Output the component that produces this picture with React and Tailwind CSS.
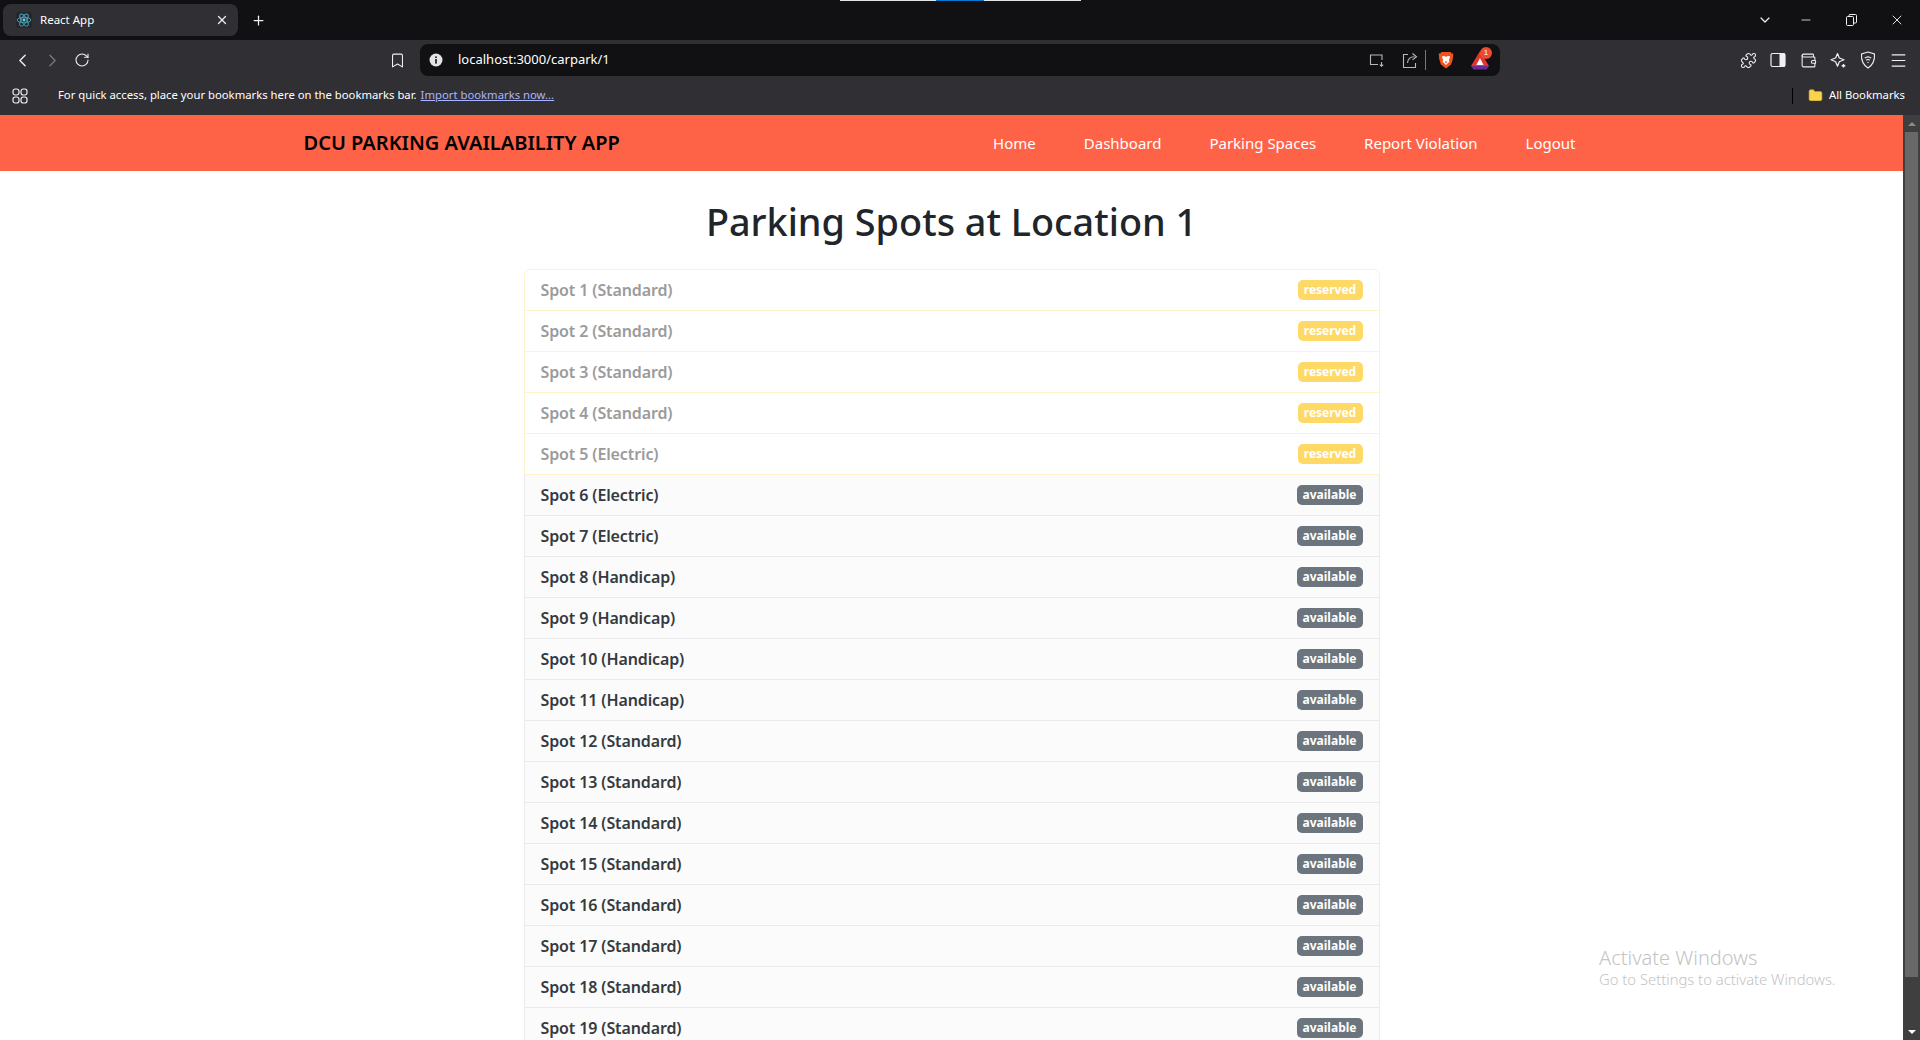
import React from "react";
import { ChevronLeft, ChevronRight, ChevronDown, RotateCw, Bookmark, Plus, X, Minus, Puzzle, Wallet, Menu, Folder } from "lucide-react";

const spots = [
  ["Standard", "reserved"], ["Standard", "reserved"], ["Standard", "reserved"], ["Standard", "reserved"],
  ["Electric", "reserved"], ["Electric", "available"], ["Electric", "available"], ["Handicap", "available"],
  ["Handicap", "available"], ["Handicap", "available"], ["Handicap", "available"], ["Standard", "available"],
  ["Standard", "available"], ["Standard", "available"], ["Standard", "available"], ["Standard", "available"],
  ["Standard", "available"], ["Standard", "available"], ["Standard", "available"],
];

const navLinks = ["Home", "Dashboard", "Parking Spaces", "Report Violation", "Logout"];

const Slot = ({ children }) => (
  <div className="w-[30px] h-[30px] flex items-center justify-center text-[#f0f0f2]">{children}</div>
);

const ReactIcon = () => (
  <svg width="16" height="16" viewBox="0 0 16 16" fill="none" stroke="#4fa3b5" strokeWidth="0.9">
    <rect width="16" height="16" rx="2" fill="#23272e" stroke="none" />
    <circle cx="8" cy="8" r="1.4" fill="#61dafb" stroke="none" />
    <ellipse cx="8" cy="8" rx="6.8" ry="2.7" />
    <ellipse cx="8" cy="8" rx="6.8" ry="2.7" transform="rotate(60 8 8)" />
    <ellipse cx="8" cy="8" rx="6.8" ry="2.7" transform="rotate(120 8 8)" />
  </svg>
);

const AppsIcon = () => (
  <svg width="16" height="16" viewBox="0 0 16 16" fill="none" stroke="#f0f0f2" strokeWidth="1.2">
    <rect x="1" y="1" width="6" height="6" rx="2.2" />
    <rect x="9" y="1" width="6" height="6" rx="2.2" />
    <rect x="1" y="9" width="6" height="6" rx="2.2" />
    <rect x="9" y="9" width="6" height="6" rx="2.2" />
  </svg>
);

const InfoDot = () => (
  <svg width="14" height="14" viewBox="0 0 14 14">
    <circle cx="7" cy="7" r="6.5" fill="#e4e4e7" />
    <rect x="6.2" y="6" width="1.6" height="4.6" fill="#111113" />
    <rect x="6.2" y="3.4" width="1.6" height="1.6" fill="#111113" />
  </svg>
);

const ScreenIcon = () => (
  <svg width="16" height="16" viewBox="0 0 16 16" fill="none" stroke="#b8b8bc" strokeWidth="1.1">
    <path d="M9 12.5H1.5V3h11.5v5" />
    <path d="M1 12.5h7.5M12.5 10v4M10.8 12.6l1.7 1.7 1.7-1.7" />
  </svg>
);

const ShareIcon = () => (
  <svg width="17" height="17" viewBox="0 0 17 17" fill="none" stroke="#b8b8bc" strokeWidth="1.1">
    <path d="M6 2.5H1.5v13h12V11" />
    <path d="M5.5 11c.3-4 3-6.3 7-6.3M10.5 1.5l4 3.2-4 3.2" />
  </svg>
);

const BraveIcon = () => (
  <svg width="16" height="18" viewBox="0 0 16 18">
    <path d="M3.5 1h9l1.2 1.4 1.6.2-.6 6-1.6 5L8 17.5 2.9 13.6l-1.6-5-.6-6 1.6-.2z" fill="#f1531f" />
    <path d="M3.8 5.5 6 5l2 .8L10 5l2.2.5-1.4 3.8.7 1.2L8 14l-3.5-3.5.7-1.2z" fill="#fff" />
    <path d="M6.5 10.5h3L8 12.5z" fill="#f1531f" />
  </svg>
);

const RewardsIcon = () => (
  <div className="relative w-[20px] h-[20px]">
    <svg width="20" height="20" viewBox="0 0 20 20">
      <path d="M10 1 19 16H1z" fill="#e5352b" />
      <path d="M1 16h18l-2.5 3.500h-13z" fill="#6b2c91" />
      <path d="M10 8l3.6 7H6.4z" fill="#fff" />
    </svg>
    <span className="absolute -top-[3px] left-[10px] w-[12px] h-[12px] rounded-full bg-[#ee4a2f] text-white text-[8px] leading-[12px] text-center font-['Liberation_Sans',sans-serif]">1</span>
  </div>
);

const PanelIcon = () => (
  <svg width="16" height="16" viewBox="0 0 16 16">
    <rect x="1" y="1.5" width="14" height="13" rx="1.5" fill="none" stroke="#f0f0f2" strokeWidth="1.2" />
    <rect x="9.5" y="1.5" width="5.5" height="13" fill="#f0f0f2" />
  </svg>
);

const SparkIcon = () => (
  <svg width="17" height="17" viewBox="0 0 17 17" fill="none" stroke="#f0f0f2" strokeWidth="1.2">
    <path d="M7.5 1.5 9.3 6l4.7 1.8-4.7 1.9-1.8 4.5-1.9-4.5L1 7.8 5.6 6z" strokeLinejoin="round" />
    <path d="M13.5 12v3.6M11.7 13.8h3.6" strokeWidth="1.4" />
  </svg>
);

const VpnIcon = () => (
  <svg width="16" height="18" viewBox="0 0 16 18" fill="none" stroke="#f0f0f2" strokeWidth="1.1">
    <path d="M8 1 14.5 3c.4 6-1 10.5-6.5 14C2.500 13.500 1.100 9 1.500 3z" />
    <path d="M4.800 7.200c2-1.700 4.400-1.700 6.400 0M6.200 9.200c1.100-.9 2.500-.9 3.600 0" />
    <circle cx="8" cy="11.400" r=".7" fill="#f0f0f2" stroke="none" />
  </svg>
);

const RestoreIcon = () => (
  <svg width="11" height="12" viewBox="0 0 11 12" fill="none" stroke="#f0f0f2" strokeWidth="1">
    <rect x=".5" y="2.500" width="7" height="9" rx="1" />
    <path d="M3 2.500V1.500a1 1 0 0 1 1-1h5.500a1 1 0 0 1 1 1V8a1 1 0 0 1-1 1h-2" />
  </svg>
);

const BrowserChrome = () => (
  <div className="shrink-0 bg-[#303034] text-[#f0f0f2] font-['Noto_Sans',sans-serif]">
    <div className="relative h-[40px] bg-[#111113] flex items-center">
      <div className="absolute top-0 left-[840px] w-[241px] h-[1px] bg-[#e4e4e4]">
        <div className="ml-[96px] w-[48px] h-[1px] bg-[#0078d4]" />
      </div>
      <div className="ml-[3px] w-[235px] h-[32px] rounded-lg bg-[#303034] flex items-center pl-[13px]">
        <ReactIcon />
        <span className="ml-[8px] text-[11.5px] text-white">React App</span>
        <X size={14} strokeWidth={2.2} className="ml-auto mr-[9px]" />
      </div>
      <Plus size={15} strokeWidth={2} className="ml-[13px]" />
      <div className="ml-auto flex items-center">
        <ChevronDown size={16} strokeWidth={1.8} className="mr-[26px]" />
        <Minus size={14} strokeWidth={1.4} className="mr-[33px]" />
        <RestoreIcon />
        <X size={16} strokeWidth={1.4} className="ml-[32px] mr-[15px]" />
      </div>
    </div>
    <div className="h-[36px] flex items-start pt-[4px]">
      <div className="flex items-center h-[32px] pl-[7px]">
        <Slot><ChevronLeft size={21} strokeWidth={1.6} /></Slot>
        <Slot><ChevronRight size={21} strokeWidth={1.6} className="text-[#77777b]" /></Slot>
        <Slot><RotateCw size={16} strokeWidth={1.6} /></Slot>
      </div>
      <div className="ml-[285px] h-[32px] flex items-center">
        <Slot><Bookmark size={17} strokeWidth={1.5} /></Slot>
      </div>
      <div className="ml-[8px] w-[1080px] h-[32px] rounded-lg bg-[#111113] flex items-center pl-[9px]">
        <InfoDot />
        <span className="ml-[15px] text-[13px] text-white">localhost:3000/carpark/1</span>
        <div className="ml-auto flex items-center pr-[5px]">
          <div className="mr-[3px]"><Slot><ScreenIcon /></Slot></div>
          <Slot><ShareIcon /></Slot>
          <div className="w-[1px] h-[20px] bg-[#77777b] mr-[5px]" />
          <Slot><BraveIcon /></Slot>
          <div className="w-[4px]" />
          <Slot><RewardsIcon /></Slot>
        </div>
      </div>
      <div className="ml-[233px] h-[32px] flex items-center">
        <Slot><Puzzle size={17} strokeWidth={1.5} /></Slot>
        <Slot><PanelIcon /></Slot>
        <Slot><Wallet size={17} strokeWidth={1.5} /></Slot>
        <Slot><SparkIcon /></Slot>
        <Slot><VpnIcon /></Slot>
        <Slot><Menu size={19} strokeWidth={1.5} /></Slot>
      </div>
    </div>
    <div className="h-[39px] flex items-center pl-[12px] text-[11.3px] text-white">
      <AppsIcon />
      <span className="ml-[30px]">For quick access, place your bookmarks here on the bookmarks bar.</span>
      <span className="ml-[4px] text-[#a8b4ff] underline">Import bookmarks now...</span>
      <div className="ml-auto flex items-center pr-[15px]">
        <div className="w-[1px] h-[16px] bg-black mr-[15px]" />
        <Folder size={15} fill="#fcd34d" stroke="#e8b93a" strokeWidth={1.4} />
        <span className="ml-[6px]">All Bookmarks</span>
      </div>
    </div>
  </div>
);

const SpotRow = ({ index, type, status }) => {
  const reserved = status === "reserved";
  return (
    <div
      className={`h-[41px] px-[16px] flex items-center justify-between border-x border-b first:h-[42px] first:border-t first:rounded-t-md ${
        reserved ? "bg-white border-[#fff3cd]" : "bg-[#fbfbfb] border-[#e9eaec]"
      }`}
    >
      <span className={`text-[16px] tracking-[-0.12px] font-semibold ${reserved ? "text-[#9b9b9b]" : "text-[#343a40]"}`}>
        Spot {index} ({type})
      </span>
      <span
        className={`h-[20px] rounded-[5px] flex items-center text-[12px] font-bold text-white ${
          reserved ? "w-[65px] justify-center bg-[#ffd966]" : "w-[66px] justify-center bg-[#6c757d]"
        }`}
      >
        {status}
      </span>
    </div>
  );
};

const App = () => {
  return (
    <div className="h-[1040px] overflow-hidden flex flex-col bg-white">
      <BrowserChrome />
      <div className="relative flex-1 min-h-0 flex font-['Noto_Sans',sans-serif]">
        <div className="flex-1 min-w-0 overflow-hidden">
          <nav className="h-[56px] bg-[#ff6347] flex items-center">
            <div className="w-[1320px] mx-auto px-[12px] flex items-center">
              <span className="text-[20px] font-semibold text-black">DCU PARKING AVAILABILITY APP</span>
              <div className="ml-auto flex gap-[48px] pr-[24px] text-[15px] text-white">
                {navLinks.map((l) => (
                  <span key={l}>{l}</span>
                ))}
              </div>
            </div>
          </nav>
          <div className="w-[856px] mx-auto">
            <h1 className="mt-[27px] mb-[23px] text-center text-[37.8px] leading-[48px] font-medium text-[#212529]">
              Parking Spots at Location 1
            </h1>
            <div>
              {spots.map(([type, status], i) => (
                <SpotRow key={i} index={i + 1} type={type} status={status} />
              ))}
            </div>
          </div>
        </div>
        <div className="w-[17px] shrink-0 bg-[#3f3f3f] flex flex-col">
          <div className="h-[17px] flex items-center justify-center">
            <div className="w-0 h-0 border-x-[4px] border-x-transparent border-b-[4px] border-b-[#8a8a8a]" />
          </div>
          <div className="mx-[2px] h-[845px] bg-[#686868]" />
          <div className="mt-auto h-[17px] flex items-center justify-center">
            <div className="w-0 h-0 border-x-[4px] border-x-transparent border-t-[4px] border-t-white" />
          </div>
        </div>
        <div className="absolute left-[1599px] top-[830px] text-[#c4c4c4]">
          <div className="text-[20px] leading-[25px] font-light">Activate Windows</div>
          <div className="text-[14.800px] leading-[19px] font-light">Go to Settings to activate Windows.</div>
        </div>
      </div>
    </div>
  );
};

export default App;
